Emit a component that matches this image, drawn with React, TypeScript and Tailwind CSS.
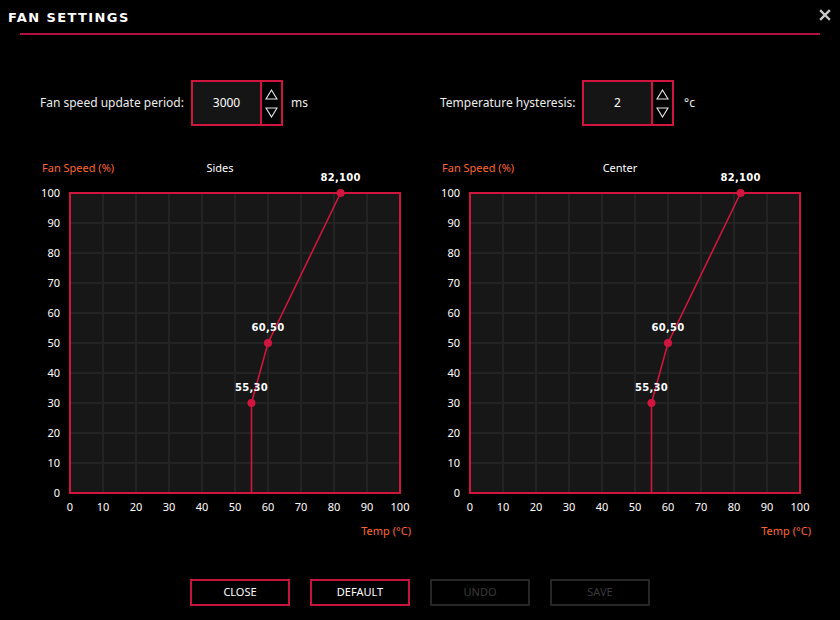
import React from "react";

const RED = "#d0163f";

function Spinner({ value }: { value: string }) {
  return (
    <div className="flex h-[46px] w-[92px] border-2 border-[#d0163f]">
      <div className="flex w-[67px] items-center justify-center bg-[#151515] text-[12px] text-white">
        {value}
      </div>
      <div className="flex flex-1 flex-col items-center justify-center gap-[7px] border-l-2 border-[#d0163f] bg-black">
        <svg width="13" height="11" viewBox="0 0 13 11">
          <path d="M6.5 1 L12 10 L1 10 Z" fill="none" stroke="#e8e8e8" strokeWidth="1.1" />
        </svg>
        <svg width="13" height="11" viewBox="0 0 13 11">
          <path d="M1 1 L12 1 L6.5 10 Z" fill="none" stroke="#e8e8e8" strokeWidth="1.1" />
        </svg>
      </div>
    </div>
  );
}

function Chart({ title }: { title: string }) {
  const px = (t: number) => 30 + t * 3.3;
  const py = (v: number) => 338 - v * 3;
  const ticks = [0, 10, 20, 30, 40, 50, 60, 70, 80, 90, 100];
  const pts: [number, number][] = [
    [55, 30],
    [60, 50],
    [82, 100],
  ];
  const poly = [[55, 0], ...pts].map(([t, v]) => `${px(t)},${py(v)}`).join(" ");
  const font = "'Noto Sans', 'DejaVu Sans', sans-serif";
  return (
    <svg width="390" height="390" viewBox="0 0 390 390" className="block">
      <text x="2" y="17" fill="#ff6534" fontSize="11" fontFamily={font}>
        Fan Speed (%)
      </text>
      <text x="180" y="17" fill="#ffffff" fontSize="11" fontFamily={font} textAnchor="middle">
        {title}
      </text>
      <rect x="30" y="38" width="330" height="300" fill="#171717" />
      {ticks.slice(1, 10).map((t) => (
        <line key={"v" + t} x1={px(t)} y1="38" x2={px(t)} y2="338" stroke="#232323" strokeWidth="2" />
      ))}
      {ticks.slice(1, 10).map((v) => (
        <line key={"h" + v} x1="30" y1={py(v)} x2="360" y2={py(v)} stroke="#232323" strokeWidth="2" />
      ))}
      <rect x="30" y="38" width="330" height="300" fill="none" stroke={RED} strokeWidth="2" />
      {ticks.map((v) => (
        <text key={"yl" + v} x="20" y={py(v) + 4} fill="#ffffff" fontSize="11" fontFamily={font} textAnchor="end">
          {v}
        </text>
      ))}
      {ticks.map((t) => (
        <text key={"xl" + t} x={px(t)} y="356" fill="#ffffff" fontSize="11" fontFamily={font} textAnchor="middle">
          {t}
        </text>
      ))}
      <text x="371" y="380" fill="#ff6534" fontSize="11" fontFamily={font} textAnchor="end">
        Temp (°C)
      </text>
      <polyline points={poly} fill="none" stroke={RED} strokeWidth="1.6" />
      {pts.map(([t, v]) => (
        <g key={t}>
          <circle cx={px(t)} cy={py(v)} r="4" fill={RED} />
          <text
            x={px(t)}
            y={py(v) - 12}
            fill="#ffffff"
            fontSize="10"
            fontWeight="bold"
            fontFamily="'DejaVu Sans', sans-serif"
            textAnchor="middle"
            letterSpacing="0.3"
          >
            {t},{v}
          </text>
        </g>
      ))}
    </svg>
  );
}

function Btn({ label, active }: { label: string; active: boolean }) {
  return (
    <div
      className={
        active
          ? "flex h-[27px] w-[100px] items-center justify-center border-2 border-[#c8143c] text-[11px] text-white"
          : "flex h-[27px] w-[100px] items-center justify-center border-2 border-[#262626] text-[11px] text-[#3a3a3a]"
      }
    >
      {label}
    </div>
  );
}

export default function App() {
  return (
    <div className="relative h-[620px] w-[840px] overflow-hidden bg-black font-['Noto_Sans',sans-serif]">
      <div className="flex h-[33px] items-start justify-between pl-2 pr-[9px] pt-[8px]">
        <div className="font-['DejaVu_Sans',sans-serif] text-[13px] font-bold tracking-[1.4px] text-white">
          FAN SETTINGS
        </div>
        <svg width="12" height="12" viewBox="0 0 12 12" className="mt-[1px]">
          <path d="M2 2 L10 10 M10 2 L2 10" stroke="#c8c8c8" strokeWidth="2.4" strokeLinecap="square" />
        </svg>
      </div>
      <div className="mx-5 h-[2px] bg-[#b0123f]" />

      <div className="mt-[45px] flex h-[46px] pl-10">
        <div className="flex w-[400px] items-center">
          <div className="w-[151px] text-[12px] text-[#ececec]">Fan speed update period:</div>
          <Spinner value="3000" />
          <div className="ml-[8px] text-[12px] text-[#ececec]">ms</div>
        </div>
        <div className="flex w-[400px] items-center">
          <div className="w-[142px] text-[12px] text-[#ececec]">Temperature hysteresis:</div>
          <Spinner value="2" />
          <div className="ml-[10px] text-[12px] text-[#ececec]">°c</div>
        </div>
      </div>

      <div className="mt-[29px] flex h-[390px] pl-10">
        <div className="w-[400px]">
          <Chart title="Sides" />
        </div>
        <div className="w-[400px]">
          <Chart title="Center" />
        </div>
      </div>

      <div className="mt-[34px] flex justify-center gap-5">
        <Btn label="CLOSE" active />
        <Btn label="DEFAULT" active />
        <Btn label="UNDO" active={false} />
        <Btn label="SAVE" active={false} />
      </div>
    </div>
  );
}
